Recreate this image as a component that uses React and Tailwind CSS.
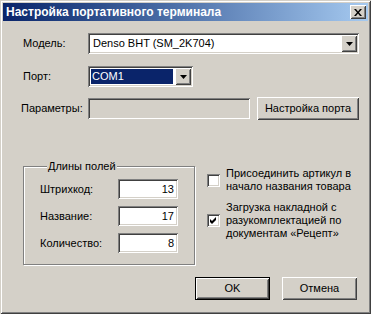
import React from "react";

const raised =
  "shadow-[inset_1px_1px_0_#fff,inset_-1px_-1px_0_#404040,inset_2px_2px_0_#d4d0c8,inset_-2px_-2px_0_#808080]";
const sunken =
  "shadow-[inset_1px_1px_0_#808080,inset_-1px_-1px_0_#fff,inset_2px_2px_0_#404040,inset_-2px_-2px_0_#d4d0c8]";

const Arrow = () => (
  <div className={`w-[16px] h-[17px] bg-[#d4d0c8] flex items-center justify-center ${raised}`}>
    <svg width="7" height="4" viewBox="0 0 7 4">
      <polygon points="0,0 7,0 3.5,4" fill="#000" />
    </svg>
  </div>
);

const Checkbox = ({ checked }) => (
  <div className={`w-[13px] h-[13px] bg-white shrink-0 flex items-center justify-center ${sunken}`}>
    {checked && (
      <svg width="7" height="7" viewBox="0 0 7 7">
        <path d="M0 2 L2 4 L6 0 L6 3 L2 7 L0 5 Z" fill="#000" />
      </svg>
    )}
  </div>
);

const Field = ({ label, value }) => (
  <div className="flex items-center h-[20px]">
    <span className="w-[78px]">{label}</span>
    <div className={`w-[60px] h-[20px] bg-white flex items-center justify-end pr-[4px] ${sunken}`}>
      {value}
    </div>
  </div>
);

const App = () => {
  return (
    <div className="w-[371px] h-[314px] bg-[#d4d0c8] p-[3px] flex flex-col text-[11px] leading-[13px] text-black font-['Liberation_Sans',Arial,sans-serif] shadow-[inset_1px_1px_0_#d4d0c8,inset_-1px_-1px_0_#404040,inset_2px_2px_0_#fff,inset_-2px_-2px_0_#808080]">
      <div className="h-[18px] flex items-center justify-between pl-[3px] pr-[2px] bg-gradient-to-r from-[#0a246a] to-[#a6caf0]">
        <span className="text-white font-bold text-[12px]">Настройка портативного терминала</span>
        <div className={`w-[16px] h-[14px] bg-[#d4d0c8] flex items-center justify-center ${raised}`}>
          <svg width="8" height="7" viewBox="0 0 8 7">
            <path d="M0 0 L2 0 L4 2.5 L6 0 L8 0 L5 3.5 L8 7 L6 7 L4 4.5 L2 7 L0 7 L3 3.5 Z" fill="#000" />
          </svg>
        </div>
      </div>

      <div className="pl-[20px] flex flex-col">
        <div className="mt-[12px] flex items-center h-[21px]">
          <span className="w-[65px]">Модель:</span>
          <div className={`w-[271px] h-[21px] bg-white p-[2px] flex items-center ${sunken}`}>
            <span className="flex-1 pl-[3px]">Denso BHT (SM_2K704)</span>
            <Arrow />
          </div>
        </div>

        <div className="mt-[12px] flex items-center h-[21px]">
          <span className="w-[65px]">Порт:</span>
          <div className={`w-[105px] h-[21px] bg-white p-[2px] flex ${sunken}`}>
            <div className="flex-1 p-[1px] pr-[2px]">
              <div className="h-full bg-[#0a246a] text-white flex items-center pl-[1px]">COM1</div>
            </div>
            <Arrow />
          </div>
        </div>

        <div className="mt-[10px] flex items-center h-[23px]">
          <span className="w-[65px] -ml-[2px] mr-[2px]">Параметры:</span>
          <div className={`w-[162px] h-[21px] bg-[#d4d0c8] ${sunken}`} />
          <div className={`ml-[7px] w-[102px] h-[23px] flex items-center justify-center ${raised}`}>
            Настройка порта
          </div>
        </div>

        <div className="mt-[40px] flex">
          <fieldset className="w-[172px] h-[105px] border border-[#808080] shadow-[inset_1px_1px_0_#fff,1px_1px_0_#fff] flex flex-col pl-[16px]">
            <legend className="ml-[7px] px-[1px] bg-[#d4d0c8] leading-[13px]">Длины полей</legend>
            <div className="mt-[6px] flex flex-col gap-[7px]">
              <Field label="Штрихкод:" value="13" />
              <Field label="Название:" value="17" />
              <Field label="Количество:" value="8" />
            </div>
          </fieldset>

          <div className="ml-[12px] flex flex-col">
            <div className="mt-[7px] flex items-center">
              <Checkbox />
              <span className="ml-[6px] whitespace-nowrap">
                Присоединить артикул в<br />начало названия товара
              </span>
            </div>
            <div className="mt-[8px] flex items-center">
              <Checkbox checked />
              <span className="ml-[6px] whitespace-nowrap">
                Загрузка накладной с<br />разукомплектацией по<br />документам «Рецепт»
              </span>
            </div>
          </div>
        </div>
      </div>

      <div className="mt-[12px] flex justify-end gap-[12px] pr-[11px]">
        <div className={`w-[75px] h-[23px] border border-black flex items-center justify-center ${raised}`}>OK</div>
        <div className={`w-[75px] h-[23px] flex items-center justify-center ${raised}`}>Отмена</div>
      </div>
    </div>
  );
};

export default App;
